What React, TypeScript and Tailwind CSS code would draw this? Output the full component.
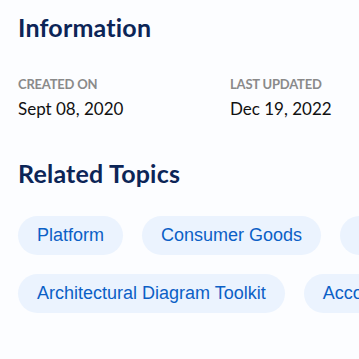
import React from 'react';

const topics = [
  ['Platform', 'Consumer Goods', 'Manufacturing'],
  ['Architectural Diagram Toolkit', 'Accounting'],
];

const dates = [
  { label: 'Created on', value: 'Sept 08, 2020' },
  { label: 'Last updated', value: 'Dec 19, 2022' },
];

export default function App() {
  return (
    <div className="w-[359px] h-[359px] overflow-hidden bg-[#fcfdff] px-[18px] pt-[12px] font-['Lato',sans-serif]">
      <h2 className="text-[25px] leading-[30px] font-bold text-[#0c2557] tracking-[0.2px]">
        Information
      </h2>
      <div className="mt-[34px] grid grid-cols-[212px_1fr]">
        {dates.map((d) => (
          <div key={d.label}>
            <div className="text-[13px] leading-[16px] font-bold text-[#8a8a8a] uppercase tracking-[-0.2px]">
              {d.label}
            </div>
            <div className="mt-[6px] text-[17px] leading-[22px] text-[#111]">{d.value}</div>
          </div>
        ))}
      </div>
      <h2 className="mt-[38px] text-[25px] leading-[30px] font-bold text-[#0c2557] tracking-[0.2px]">
        Related Topics
      </h2>
      <div className="mt-[28px] flex flex-col gap-[19px]">
        {topics.map((row, i) => (
          <div key={i} className="flex gap-[19px] whitespace-nowrap">
            {row.map((t) => (
              <span
                key={t}
                className="shrink-0 h-[39px] px-[19px] rounded-full bg-[#ebf3fe] text-[#0b60c6] text-[18px] font-['Liberation_Sans',Arial,sans-serif] flex items-center"
              >
                {t}
              </span>
            ))}
          </div>
        ))}
      </div>
    </div>
  );
}
